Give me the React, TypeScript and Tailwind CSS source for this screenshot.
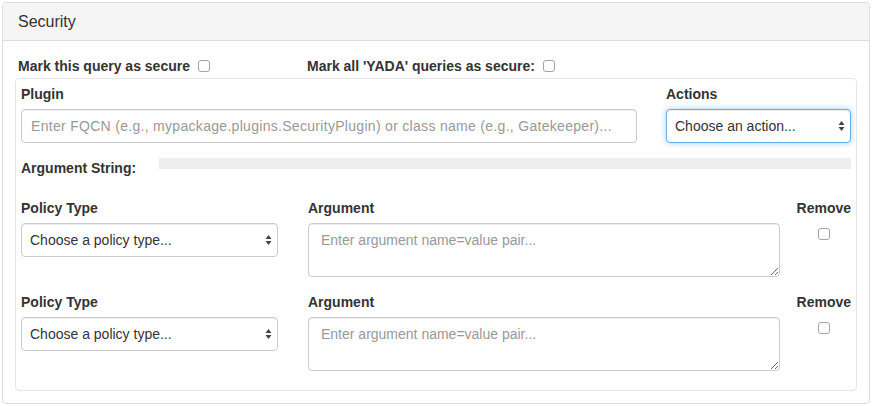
import React from 'react';

function Arrows() {
  return (
    <svg
      width="7"
      height="12"
      viewBox="0 0 7 12"
      className="pointer-events-none absolute right-[6px] top-1/2 -translate-y-1/2"
    >
      <path d="M3.5 1 L6.5 5 L0.5 5 Z" fill="#444" />
      <path d="M3.5 11 L6.5 7 L0.5 7 Z" fill="#444" />
    </svg>
  );
}

function Select({ label, focused }: { label: string; focused?: boolean }) {
  return (
    <div className="relative">
      <select
        className={
          'block w-full h-[34px] appearance-none rounded-[4px] border bg-white pl-[8px] pr-[20px] text-[14px] text-[#333] outline-none ' +
          (focused
            ? 'border-[#66afe9] shadow-[inset_0_1px_1px_rgba(0,0,0,0.075),0_0_6px_rgba(102,175,233,0.6)]'
            : 'border-[#ccc] shadow-[inset_0_1px_1px_rgba(0,0,0,0.075)]')
        }
        defaultValue=""
      >
        <option value="">{label}</option>
      </select>
      <Arrows />
    </div>
  );
}

function Check() {
  return (
    <input
      type="checkbox"
      className="block appearance-none w-[12px] h-[12px] rounded-[3px] border border-[#a3a3a3] bg-white"
    />
  );
}

function PolicyRow({ first }: { first?: boolean }) {
  return (
    <div className={'flex ' + (first ? 'mt-[20px]' : 'mt-[15px]')}>
      <div className="w-[257px]">
        <label className="block font-bold leading-[20px] mb-[5px]">Policy Type</label>
        <Select label="Choose a policy type..." />
      </div>
      <div className="w-[472px] ml-[30px]">
        <label className="block font-bold leading-[20px] mb-[5px]">Argument</label>
        <textarea
          placeholder="Enter argument name=value pair..."
          className="block w-full h-[54px] rounded-[4px] border border-[#ccc] px-[12px] py-[6px] text-[14px] leading-[20px] text-[#555] placeholder:text-[#999] shadow-[inset_0_1px_1px_rgba(0,0,0,0.075)] outline-none"
        />
      </div>
      <div className="ml-auto flex flex-col items-center">
        <label className="block font-bold leading-[20px]">Remove</label>
        <div className="mt-[10px]">
          <Check />
        </div>
      </div>
    </div>
  );
}

export default function App() {
  return (
    <div className="pl-[2px] pt-[2px] font-['Liberation_Sans',Arial,sans-serif] text-[14px] text-[#333]">
      <div className="w-[868px] rounded-[4px] border border-[#ddd] bg-white">
        <div className="h-[38px] flex items-center px-[15px] bg-[#f5f5f5] border-b border-[#ddd] rounded-t-[4px] text-[16px]">
          Security
        </div>
        <div className="px-[12px] pt-[15px] pb-[12px]">
          <div className="flex items-center h-[20px] pl-[3px] font-bold">
            <div className="w-[289px] flex items-center">
              <span>Mark this query as secure</span>
              <span className="ml-[8px]">
                <Check />
              </span>
            </div>
            <div className="flex items-center">
              <span>Mark all 'YADA' queries as secure:</span>
              <span className="ml-[8px]">
                <Check />
              </span>
            </div>
          </div>

          <div className="mt-[2px] rounded-[4px] border border-[#e6e6e6] px-[5px] pt-[5px] pb-[19px]">
            <div className="flex">
              <div className="w-[616px]">
                <label className="block font-bold leading-[20px] mb-[5px]">Plugin</label>
                <input
                  type="text"
                  placeholder="Enter FQCN (e.g., mypackage.plugins.SecurityPlugin) or class name (e.g., Gatekeeper)..."
                  className="block w-full h-[34px] rounded-[4px] border border-[#ccc] px-[9px] text-[14px] tracking-[0.3px] text-[#555] placeholder:text-[#999] shadow-[inset_0_1px_1px_rgba(0,0,0,0.075)] outline-none"
                />
              </div>
              <div className="ml-[29px] flex-1">
                <label className="block font-bold leading-[20px] mb-[5px]">Actions</label>
                <Select label="Choose an action..." focused />
              </div>
            </div>

            <div className="mt-[15px] flex items-start">
              <div className="w-[138px] font-bold leading-[20px]">Argument String:</div>
              <div className="flex-1 h-[11px] bg-[#eee]" />
            </div>

            <PolicyRow first />
            <PolicyRow />
          </div>
        </div>
      </div>
    </div>
  );
}
